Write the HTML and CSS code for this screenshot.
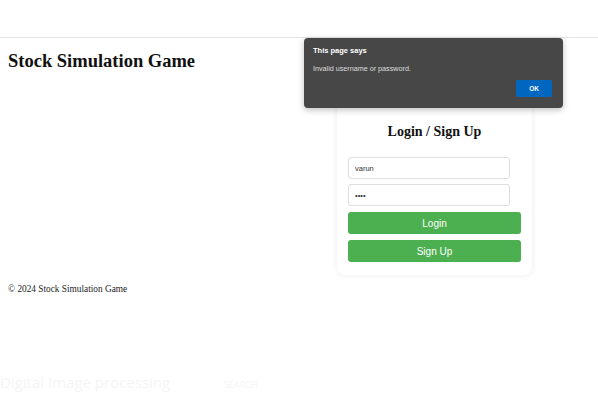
FILE: index.html
```html
<!DOCTYPE html>
<html lang="en">
<head>
    <meta charset="UTF-8">
    <meta name="viewport" content="width=device-width, initial-scale=1.0">
    <title>Stock Simulation Game</title>
    <link rel="stylesheet" href="styles.css">
</head>
<body>

<div class="topbar"></div>

<div class="page">
    <header>
        <h1>Stock Simulation Game</h1>
    </header>

    <!-- Login box -->
    <div class="auth-card">
        <h2>Login / Sign Up</h2>
        <input type="text" class="field" value="varun">
        <input type="password" class="field" value="abcd">
        <button class="btn">Login</button>
        <button class="btn">Sign Up</button>
    </div>
</div>

<footer>
    <p>&copy; 2024 Stock Simulation Game</p>
</footer>

<div class="backdrop-text">
    <span>Digital Image processing</span>
    <span class="small">SEARCH</span>
</div>

<!-- Browser alert -->
<div class="alert">
    <div class="alert-title">This page says</div>
    <div class="alert-msg">Invalid username or password.</div>
    <div class="alert-actions">
        <button class="alert-ok">OK</button>
    </div>
</div>

</body>
</html>
```

FILE: styles.css
```css
body {
    font-family: 'Liberation Serif', 'Times New Roman', Times, serif;
    margin: 0;
    padding: 0;
    background-color: #fff;
    color: #222;
}
.topbar {
    height: 37px;
    border-bottom: 1px solid #e4e4e4;
}
.page {
    display: flex;
    justify-content: space-between;
    align-items: flex-start;
}
header h1 {
    margin: 13px 0 0 8px;
    font-size: 18.5px;
    color: #111;
}
.auth-card {
    width: 173px;
    margin: 62px 66px 0 0;
    padding: 0 11px 13px;
    background: #fff;
    border-radius: 8px;
    box-shadow: 0 0 6px rgba(0, 0, 0, 0.08);
    display: flex;
    flex-direction: column;
}
.auth-card h2 {
    margin: 24px 0 17px;
    font-size: 14px;
    text-align: center;
    color: #111;
}
.field {
    width: 162px;
    height: 22px;
    box-sizing: border-box;
    margin-bottom: 5px;
    padding: 0 6px;
    font-family: 'Liberation Sans', Arial, sans-serif;
    font-size: 7.5px;
    color: #333;
    border: 1px solid #ddd;
    border-radius: 3px;
}
.btn {
    height: 22px;
    margin-top: 1px;
    margin-bottom: 5px;
    font-family: 'Liberation Sans', Arial, sans-serif;
    font-size: 10px;
    color: #fff;
    background-color: #4caf50;
    border: none;
    border-radius: 3px;
}
.btn:last-child {
    margin-bottom: 0;
}
footer p {
    margin: 9px 0 0 8px;
    font-size: 9.3px;
    color: #222;
}
.backdrop-text {
    margin-top: 78px;
    font-family: 'Open Sans', sans-serif;
    font-size: 15px;
    color: #f5f5f5;
}
.backdrop-text .small {
    margin-left: 50px;
    font-size: 9px;
}
.alert {
    position: absolute;
    left: 304px;
    top: 38px;
    width: 259px;
    height: 70px;
    box-sizing: border-box;
    padding: 8px 10px 0 9px;
    background-color: #474747;
    border-radius: 4px;
    box-shadow: 0 2px 6px rgba(0, 0, 0, 0.25);
    font-family: 'Liberation Sans', Arial, sans-serif;
    color: #fff;
}
.alert-title {
    font-size: 7.5px;
    font-weight: bold;
}
.alert-msg {
    margin-top: 9px;
    font-size: 7.2px;
    color: #ddd;
}
.alert-actions {
    display: flex;
    justify-content: flex-end;
    margin-top: 7px;
}
.alert-ok {
    width: 36px;
    height: 17px;
    margin-right: 1px;
    font-family: 'Liberation Sans', Arial, sans-serif;
    font-size: 6.5px;
    font-weight: bold;
    color: #fff;
    background-color: #0067c0;
    border: none;
    border-radius: 2px;
}
```
